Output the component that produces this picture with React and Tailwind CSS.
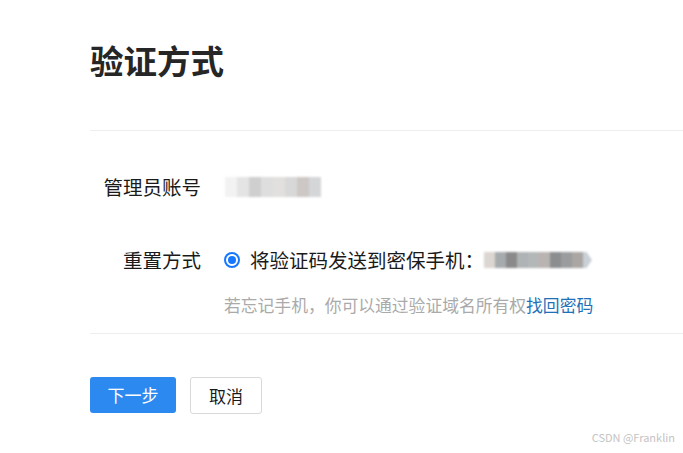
import React from 'react'

const font = { fontFamily: '"Noto Sans CJK SC", "Noto Sans", sans-serif' }

function Blur({ colors, w, h, tip }) {
  return (
    <div className="flex items-center blur-[1px]" style={{ height: h }}>
      {colors.map((c, i) => (
        <div key={i} className="h-full" style={{ width: w, background: c }} />
      ))}
      {tip && (
        <div
          className="h-full w-[9px] bg-[#c9d0d6]"
          style={{ clipPath: 'polygon(0 0, 40% 0, 100% 50%, 40% 100%, 0 100%)' }}
        />
      )}
    </div>
  )
}

export default function App() {
  return (
    <div
      className="relative min-h-screen w-full bg-white pl-[90px] text-[#1a1a1a]"
      style={font}
    >
      <div className="border-b border-[#eeeeee] pt-[36px] pb-[46px]">
        <h1 className="h-[48px] text-[33.5px] font-bold leading-[48px] text-[#262626]">
          验证方式
        </h1>
      </div>

      <div className="border-b border-[#eeeeee] pb-[16px]">
        <div className="mt-[36px] flex h-[40px] items-center">
          <div className="w-[111px] text-right text-[19.5px] text-[#1a1a1a]">管理员账号</div>
          <div className="ml-[24px]">
            <Blur
              w={12}
              h={20}
              colors={['#f2f2f2', '#e4e4e4', '#cfcfcf', '#dedede', '#e2e0de', '#d8d8d8', '#cdc8c6', '#d4d6d8']}
            />
          </div>
        </div>

        <div className="mt-[33px] flex h-[40px] items-center">
          <div className="w-[111px] text-right text-[19.5px] text-[#1a1a1a]">重置方式</div>
          <div className="ml-[23px] flex items-center">
            <span className="flex h-[16px] w-[16px] items-center justify-center rounded-full border-2 border-[#1677ff]">
              <span className="h-[8px] w-[8px] rounded-full bg-[#1677ff]" />
            </span>
            <span className="ml-[10px] text-[19.5px] text-[#1a1a1a]">将验证码发送到密保手机：</span>
            <Blur
              w={11}
              h={16}
              tip
              colors={['#dcd6d2', '#a8abad', '#8a8a8a', '#b0b3b5', '#b4b7b7', '#b9b4b1', '#8b8d8f', '#9a9c9e', '#a9a6a4']}
            />
          </div>
        </div>

        <p className="mt-[13px] ml-[134px] h-[24px] text-[16.8px] leading-[24px] text-[#aaaaaa]">
          若忘记手机，你可以通过验证域名所有权
          <span className="text-[#1e70b8]">找回密码</span>
        </p>
      </div>

      <div className="mt-[43px] flex gap-[14px]">
        <button className="h-[36px] w-[86px] rounded-[3px] bg-[#2b89ef] text-[17px] text-white">
          下一步
        </button>
        <button className="h-[37px] w-[72px] rounded-[3px] border border-[#d9d9d9] bg-white text-[17px] text-[#1a1a1a]">
          取消
        </button>
      </div>

      <div className="absolute right-[8px] bottom-[8px] text-[11px] text-[#c4c4c4]">
        CSDN @Franklin
      </div>
    </div>
  )
}
